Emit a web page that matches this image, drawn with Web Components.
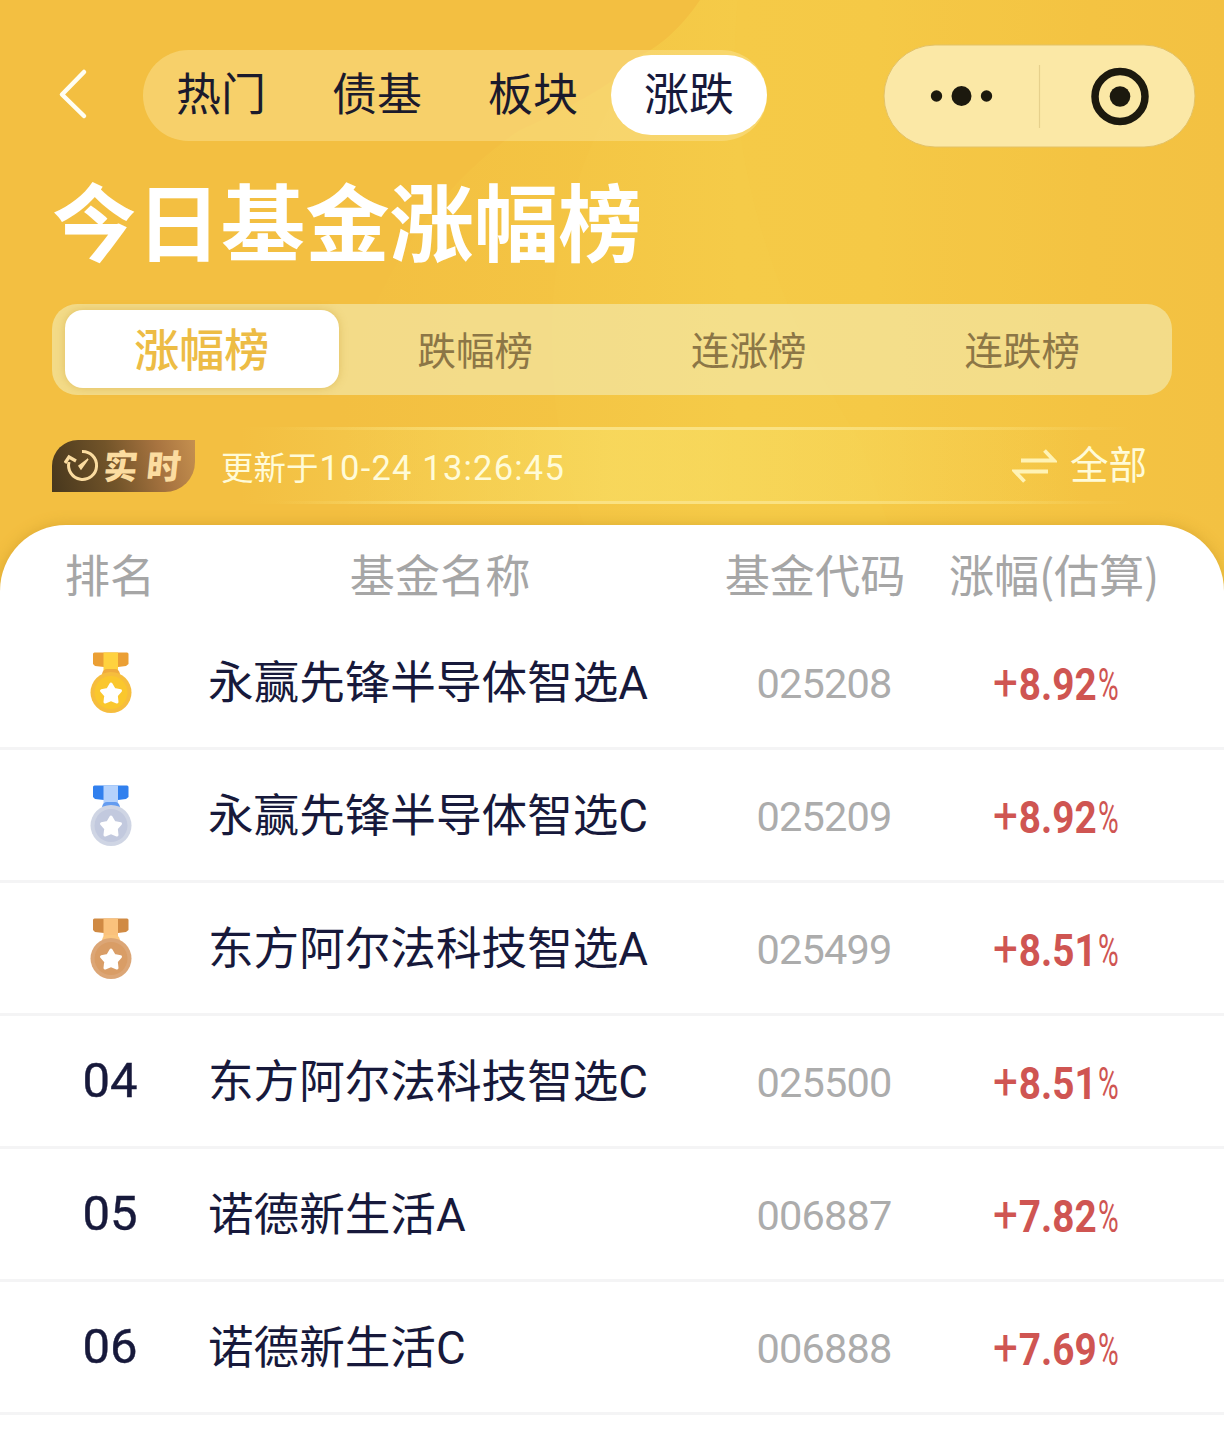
<!DOCTYPE html>
<html lang="zh-CN">
<head>
<meta charset="UTF-8">
<title>今日基金涨幅榜</title>
<style>
    body {
        margin: 0;
        background: #fff;
        font-family: "Noto Sans CJK SC", sans-serif;
        color: #17193b;
    }
</style>
</head>
<body>
<fund-page>
    <nav-bar slot="top" items='["热门","债基","板块","涨跌"]' active="3"></nav-bar>
    <span slot="title">今日基金涨幅榜</span>
    <segment-tabs slot="tabs" items='["涨幅榜","跌幅榜","连涨榜","连跌榜"]' active="0"></segment-tabs>
    <update-strip slot="strip">
        <span slot="label">更新于</span>
        <span slot="time">10-24 13:26:45</span>
        <span slot="filter">全部</span>
    </update-strip>
    <fund-table></fund-table>
</fund-page>

<script>
class FundPage extends HTMLElement {
    constructor() {
        super();
        this.attachShadow({ mode: "open" });
        this.shadowRoot.innerHTML = `
            <style>
                :host {
                    display: block;
                    position: relative;
                    height: 1430px;
                    overflow: hidden;
                }
                .backdrop {
                    position: absolute;
                    top: 0;
                    left: 0;
                    z-index: -1;
                }
                header {
                    display: flex;
                    flex-direction: column;
                    height: 525px;
                    box-sizing: border-box;
                    padding: 44px 0 0 52px;
                }
                h1 {
                    margin: 20px 0 4px;
                    height: 100px;
                    line-height: 100px;
                    font-size: 84.400px;
                    font-weight: 700;
                    color: #fff;
                    white-space: nowrap;
                }
            </style>
            <svg class="backdrop" width="1224" height="640" viewBox="0 0 1224 640">
                <defs>
                    <linearGradient id="glow" gradientUnits="userSpaceOnUse" x1="552" y1="0" x2="1224" y2="0">
                        <stop offset="0" stop-color="#f4c544"/>
                        <stop offset=".28" stop-color="#f5cb48"/>
                        <stop offset=".48" stop-color="#f5ca47"/>
                        <stop offset=".8" stop-color="#f4c343"/>
                        <stop offset="1" stop-color="#f3c142"/>
                    </linearGradient>
                    <linearGradient id="disc" gradientUnits="userSpaceOnUse" x1="340" y1="0" x2="640" y2="0">
                        <stop offset="0" stop-color="#f3bf41"/>
                        <stop offset="1" stop-color="#f4c644"/>
                    </linearGradient>
                </defs>
                <rect width="1224" height="640" fill="#f3bf41"/>
                <path d="M705 0C650 60 600 95 520 130C430 190 370 290 340 400V640H1224V0Z" fill="url(#disc)"/>
                <path d="M700 0C680 30 655 50 640 55C590 130 552 230 552 330C552 430 570 500 600 560H1224V0Z" fill="url(#glow)"/>
                <path d="M738 0C725 110 750 270 860 440L900 560H1224V0Z" fill="#f4c344" opacity=".12"/>
            </svg>
            <header>
                <slot name="top"></slot>
                <h1><slot name="title"></slot></h1>
                <slot name="tabs"></slot>
                <slot name="strip"></slot>
            </header>
            <slot></slot>
        `;
    }
}

class NavBar extends HTMLElement {
    constructor() {
        super();
        this.attachShadow({ mode: "open" });
        this.shadowRoot.innerHTML = `
            <style>
                :host {
                    display: flex;
                    align-items: flex-start;
                    height: 104px;
                }
                .back {
                    width: 91px;
                    height: 104px;
                }
                .pill {
                    display: flex;
                    margin-top: 6px;
                    padding: 5px 0 6px;
                    width: 624px;
                    height: 80px;
                    border-radius: 46px;
                    background: rgba(250, 228, 150, .48);
                }
                .pill div {
                    width: 156px;
                    height: 80px;
                    line-height: 73px;
                    font-size: 45px;
                    text-align: center;
                    border-radius: 40px;
                    color: #1b1a2c;
                }
                .pill .active {
                    background: #fff;
                    color: #17193b;
                }
                .capsule {
                    margin-left: 116px;
                }
            </style>
            <svg class="back" viewBox="0 0 91 104">
                <path d="M32 28L10 50.500L32 72" fill="none" stroke="#fffef2" stroke-width="4.500" stroke-linecap="round" stroke-linejoin="round"/>
            </svg>
            <div class="pill"></div>
            <svg class="capsule" width="313" height="104" viewBox="0 0 313 104">
                <rect x="1" y="1" width="311" height="102" rx="51" fill="#fbe8a6" stroke="#e3c267" stroke-width="1"/>
                <path d="M156.500 21V84" stroke="#e6d08c" stroke-width="1.200"/>
                <g fill="#1c190e">
                    <circle cx="53.500" cy="52" r="5.700"/>
                    <circle cx="78.500" cy="52" r="10"/>
                    <circle cx="103.500" cy="52" r="5.700"/>
                    <circle cx="237" cy="52.500" r="10.300"/>
                </g>
                <circle cx="237" cy="52.500" r="25" fill="none" stroke="#1c190e" stroke-width="7.500"/>
            </svg>
        `;
    }

    connectedCallback() {
        const items = JSON.parse(this.getAttribute("items"));
        const active = Number(this.getAttribute("active"));
        this.shadowRoot.querySelector(".pill").innerHTML = items
            .map((item, i) => `<div class="${i === active ? "active" : ""}">${item}</div>`)
            .join("");
    }
}

class SegmentTabs extends HTMLElement {
    constructor() {
        super();
        this.attachShadow({ mode: "open" });
        this.shadowRoot.innerHTML = `
            <style>
                :host {
                    display: flex;
                    box-sizing: border-box;
                    flex: none;
                    width: 1120px;
                    height: 91px;
                    margin-top: 32px;
                    padding: 6px 13px 7px;
                    border-radius: 25px;
                    background: rgba(243, 233, 175, .65);
                }
                div {
                    flex: 1;
                    height: 78px;
                    line-height: 76px;
                    font-size: 38.500px;
                    text-align: center;
                    color: #8c7646;
                }
                .active {
                    background: #fff;
                    border-radius: 18px;
                    box-shadow: 0 0 9px rgba(190, 140, 30, .35);
                    color: #edbc45;
                    font-size: 45px;
                    font-weight: 500;
                    line-height: 76px;
                }
            </style>
        `;
    }

    connectedCallback() {
        const items = JSON.parse(this.getAttribute("items"));
        const active = Number(this.getAttribute("active"));
        items.forEach((item, i) => {
            const tab = document.createElement("div");
            tab.textContent = item;
            if (i === active) tab.className = "active";
            this.shadowRoot.appendChild(tab);
        });
    }
}

class UpdateStrip extends HTMLElement {
    constructor() {
        super();
        this.attachShadow({ mode: "open" });
        this.shadowRoot.innerHTML = `
            <style>
                :host {
                    --line: linear-gradient(90deg, transparent 19%, #fae283 43%, #fae283 62%, transparent 92%);
                    display: flex;
                    align-items: center;
                    box-sizing: border-box;
                    height: 77px;
                    margin-top: 32px;
                    padding-right: 77px;
                    background:
                        var(--line) 0 0 / 100% 3px no-repeat,
                        var(--line) 0 100% / 100% 3px no-repeat,
                        linear-gradient(90deg, transparent 16%, rgba(248, 220, 98, .75) 48%, rgba(248, 220, 98, .7) 56%, transparent 88%);
                    color: #fffbd8;
                    white-space: nowrap;
                }
                .badge {
                    display: flex;
                    align-items: center;
                    box-sizing: border-box;
                    width: 143px;
                    height: 52px;
                    padding-left: 12px;
                    border-radius: 26px 0 30px 0;
                    background: linear-gradient(75deg, #47371d, #725429 42%, #a87440 75%, #c5904f);
                    color: #fbdca0;
                    font-size: 34px;
                    font-weight: 900;
                    line-height: 46px;
                }
                .badge b {
                    font-weight: 900;
                    transform: translateY(-1px) skewX(-6deg);
                }
                .badge b + b {
                    margin-left: 9px;
                }
                .label {
                    margin-left: 26px;
                    font-size: 32.500px;
                    line-height: 70px;
                }
                .time {
                    font-family: Roboto, sans-serif;
                    font-size: 34.500px;
                    letter-spacing: 1.200px;
                    line-height: 70px;
                    margin: 4px 0 0 1px;
                }
                .swap {
                    margin-left: auto;
                }
                .filter {
                    margin-left: 13px;
                    font-size: 38.500px;
                    line-height: 70px;
                    margin-top: -7px;
                }
            </style>
            <div class="badge">
                <svg width="40" height="40" viewBox="0 0 40 40" fill="none" stroke="#fbdca0" stroke-width="3">
                    <path d="M18 5.500A14 14 0 1 1 5 16"/>
                    <path d="M1 17L5 11L12 15" stroke-width="3.200"/>
                    <path d="M24 13L17 23L15 20Z" fill="#fbdca0" stroke-width="1.500"/>
                </svg>
                <b>实</b><b>时</b>
            </div>
            <span class="label"><slot name="label"></slot></span>
            <span class="time"><slot name="time"></slot></span>
            <svg class="swap" width="45" height="36" viewBox="0 0 45 36" fill="none" stroke="#fff3b5" stroke-width="3.800">
                <path d="M9 12.500H42L32.500 2.500"/>
                <path d="M36 23.500H3L12.500 33.500"/>
            </svg>
            <span class="filter"><slot name="filter"></slot></span>
        `;
    }
}

class RankMedal extends HTMLElement {
    constructor() {
        super();
        this.attachShadow({ mode: "open" });
    }

    connectedCallback() {
        // side ribbon, middle ribbon, clasp, rim, face
        const colors = {
            1: ["#eb9f34", "#ffd23f", "#efab3d", "#f6bd3d", "#fac72d"],
            2: ["#3180ee", "#b5d2fc", "#649cf0", "#cfd5e4", "#c2c9de"],
            3: ["#d08a43", "#fac27c", "#fbc77f", "#dca676", "#d99d66"]
        }[this.getAttribute("rank")];
        this.shadowRoot.innerHTML = `
            <style>
                :host {
                    display: block;
                    width: 42px;
                    height: 62px;
                    margin: 1px 0 0 1px;
                }
                svg {
                    display: block;
                }
            </style>
            <svg width="42" height="62" viewBox="0 0 42 62">
                <path d="M3 2Q3 .5 4.500 .5H37Q38.500 .5 38.500 2V12L36 14L28 15H14L5 14L3 12Z" fill="${colors[0]}"/>
                <path d="M13.500 .5H28V19H13.500Z" fill="${colors[1]}"/>
                <path d="M12 22Q13 17 17 17H25Q29 17 30 22Z" fill="${colors[2]}"/>
                <circle cx="21" cy="40.500" r="20.500" fill="${colors[3]}"/>
                <circle cx="21" cy="40.500" r="16.500" fill="${colors[4]}"/>
                <path d="M21 32L24.200 37.500L30.500 38.800L26.300 43.500L27 50L21 47.500L15 50L15.700 43.500L11.500 38.800L17.800 37.500Z" fill="#fff" stroke="#fff" stroke-width="3" stroke-linejoin="round"/>
            </svg>
        `;
    }
}

class FundRow extends HTMLElement {
    constructor() {
        super();
        this.attachShadow({ mode: "open" });
    }

    connectedCallback() {
        const rank = this.getAttribute("rank");
        const change = this.getAttribute("change");
        this.shadowRoot.innerHTML = `
            <style>
                :host {
                    display: grid;
                    grid-template-columns: 208px 493px 246px 1fr;
                    align-items: center;
                    box-sizing: border-box;
                    height: 133px;
                    border-bottom: 3px solid #f4f4f5;
                    line-height: 60px;
                    white-space: nowrap;
                }
                .rank {
                    display: flex;
                    justify-content: center;
                    width: 220px;
                    font: 400 49px/60px Roboto, sans-serif;
                    -webkit-text-stroke: .4px;
                }
                .name {
                    font-family: Roboto, "Noto Sans CJK SC", sans-serif;
                    font-size: 45.600px;
                    margin-top: 4px;
                }
                .code {
                    font: 400 41.500px/60px Roboto, sans-serif;
                    letter-spacing: -.8px;
                    text-align: center;
                    color: #acacac;
                    margin-top: 3px;
                }
                .change {
                    display: flex;
                    align-items: baseline;
                    width: 140px;
                    margin: 3px 0 0 46px;
                    font: 700 45px/60px Roboto, sans-serif;
                    color: #cf5552;
                    transform: scaleX(.86);
                    transform-origin: 0 50%;
                }
                .change i {
                    font-style: normal;
                    font-weight: 400;
                    font-size: 51px;
                    margin-right: 1px;
                }
                .change .percent {
                    font-size: 45px;
                    margin-left: 1.500px;
                    transform: scaleX(.73);
                    transform-origin: 0 50%;
                }
            </style>
            <div class="rank">${rank > 3 ? rank : `<rank-medal rank="${rank}"></rank-medal>`}</div>
            <div class="name">${this.getAttribute("name")}</div>
            <div class="code">${this.getAttribute("code")}</div>
            <div class="change"><i>+</i>${change}<i class="percent">%</i></div>
        `;
    }
}

class FundTable extends HTMLElement {
    constructor() {
        super();
        this.attachShadow({ mode: "open" });
        const funds = [
            ["1", "永赢先锋半导体智选A", "025208", "8.92"],
            ["2", "永赢先锋半导体智选C", "025209", "8.92"],
            ["3", "东方阿尔法科技智选A", "025499", "8.51"],
            ["04", "东方阿尔法科技智选C", "025500", "8.51"],
            ["05", "诺德新生活A", "006887", "7.82"],
            ["06", "诺德新生活C", "006888", "7.69"]
        ];
        this.shadowRoot.innerHTML = `
            <style>
                :host {
                    display: block;
                    height: 905px;
                    border-radius: 66px 66px 0 0;
                    background: #fff;
                    box-shadow: 0 0 14px rgba(190, 140, 30, .45);
                }
                .head {
                    display: grid;
                    grid-template-columns: 220px 440px 310px 1fr;
                    height: 92px;
                    line-height: 97px;
                    font-size: 45.200px;
                    text-align: center;
                    color: #a6a6a6;
                    white-space: nowrap;
                }
                .head :last-child {
                    text-align: left;
                    margin-left: -21px;
                    letter-spacing: -.2px;
                }
            </style>
            <div class="head">
                <span>排名</span><span>基金名称</span><span>基金代码</span><span>涨幅(估算)</span>
            </div>
            ${funds.map(([rank, name, code, change]) =>
                `<fund-row rank="${rank}" name="${name}" code="${code}" change="${change}"></fund-row>`).join("")}
        `;
    }
}

customElements.define("rank-medal", RankMedal);
customElements.define("fund-row", FundRow);
customElements.define("fund-table", FundTable);
customElements.define("nav-bar", NavBar);
customElements.define("segment-tabs", SegmentTabs);
customElements.define("update-strip", UpdateStrip);
customElements.define("fund-page", FundPage);
</script>
</body>
</html>
